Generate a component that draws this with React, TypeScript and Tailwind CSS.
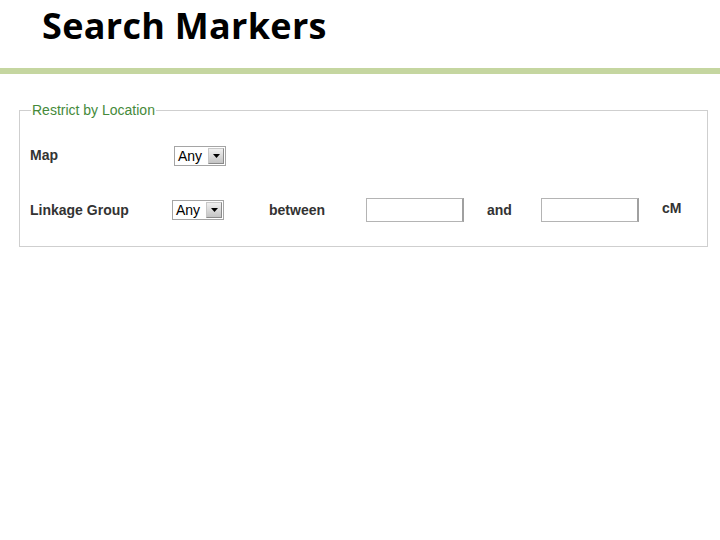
export default function App() {
  return (
    <div className="h-[540px] w-[720px] bg-white font-['Liberation_Sans',Arial,sans-serif]">
      {/* title */}
      <div className="pl-[42px] pt-[2px] h-[68px]">
        <h1 className="font-['Open_Sans',sans-serif] text-[36px] font-bold leading-[48px] tracking-[0.3px] text-black">
          Search Markers
        </h1>
      </div>
      <div className="h-[6px] w-full bg-[#c5d6a0]" />

      <fieldset className="ml-[19px] mt-[28px] w-[689px] border border-[#cfcfcf] pl-[10px] pb-[24px] pt-[27px]">
        <legend className="ml-[1px] px-[1px] text-[14px] leading-[16px] text-[#458a3a]">
          Restrict by Location
        </legend>

        <div className="flex items-center">
          <div className="w-[144px] text-[14px] font-bold text-[#333]">Map</div>
          <FakeSelect />
        </div>

        <div className="mt-[32px] flex items-center">
          <div className="w-[142px] text-[14px] font-bold text-[#333]">Linkage Group</div>
          <FakeSelect />
          <div className="ml-[45px] w-[97px] text-[14px] font-bold text-[#333]">between</div>
          <input className="h-[24px] w-[98px] border border-[#b4b4b4] border-r-2 border-r-[#a0a0a0] bg-white" />
          <div className="ml-[23px] w-[54px] text-[14px] font-bold text-[#333]">and</div>
          <input className="h-[24px] w-[98px] border border-[#b4b4b4] border-r-2 border-r-[#a0a0a0] bg-white" />
          <div className="ml-[23px] -mt-[3px] text-[14px] font-bold text-[#333]">cM</div>
        </div>
      </fieldset>
    </div>
  );
}

function FakeSelect() {
  return (
    <div className="flex h-[20px] w-[52px] items-center border border-[#a5a5a5] bg-white pl-[3px]">
      <span className="text-[14px] leading-[18px] text-black">Any</span>
      <span className="ml-auto mr-[1px] flex h-[16px] w-[16px] items-center justify-center border border-[#8a8a8a] border-t-[#c8c8c8] border-l-[#c8c8c8] bg-gradient-to-b from-[#f0f0f0] to-[#c4c4c4]">
        <svg width="7" height="4" viewBox="0 0 7 4">
          <path d="M0 0h7L3.5 4z" fill="#000" />
        </svg>
      </span>
    </div>
  );
}
